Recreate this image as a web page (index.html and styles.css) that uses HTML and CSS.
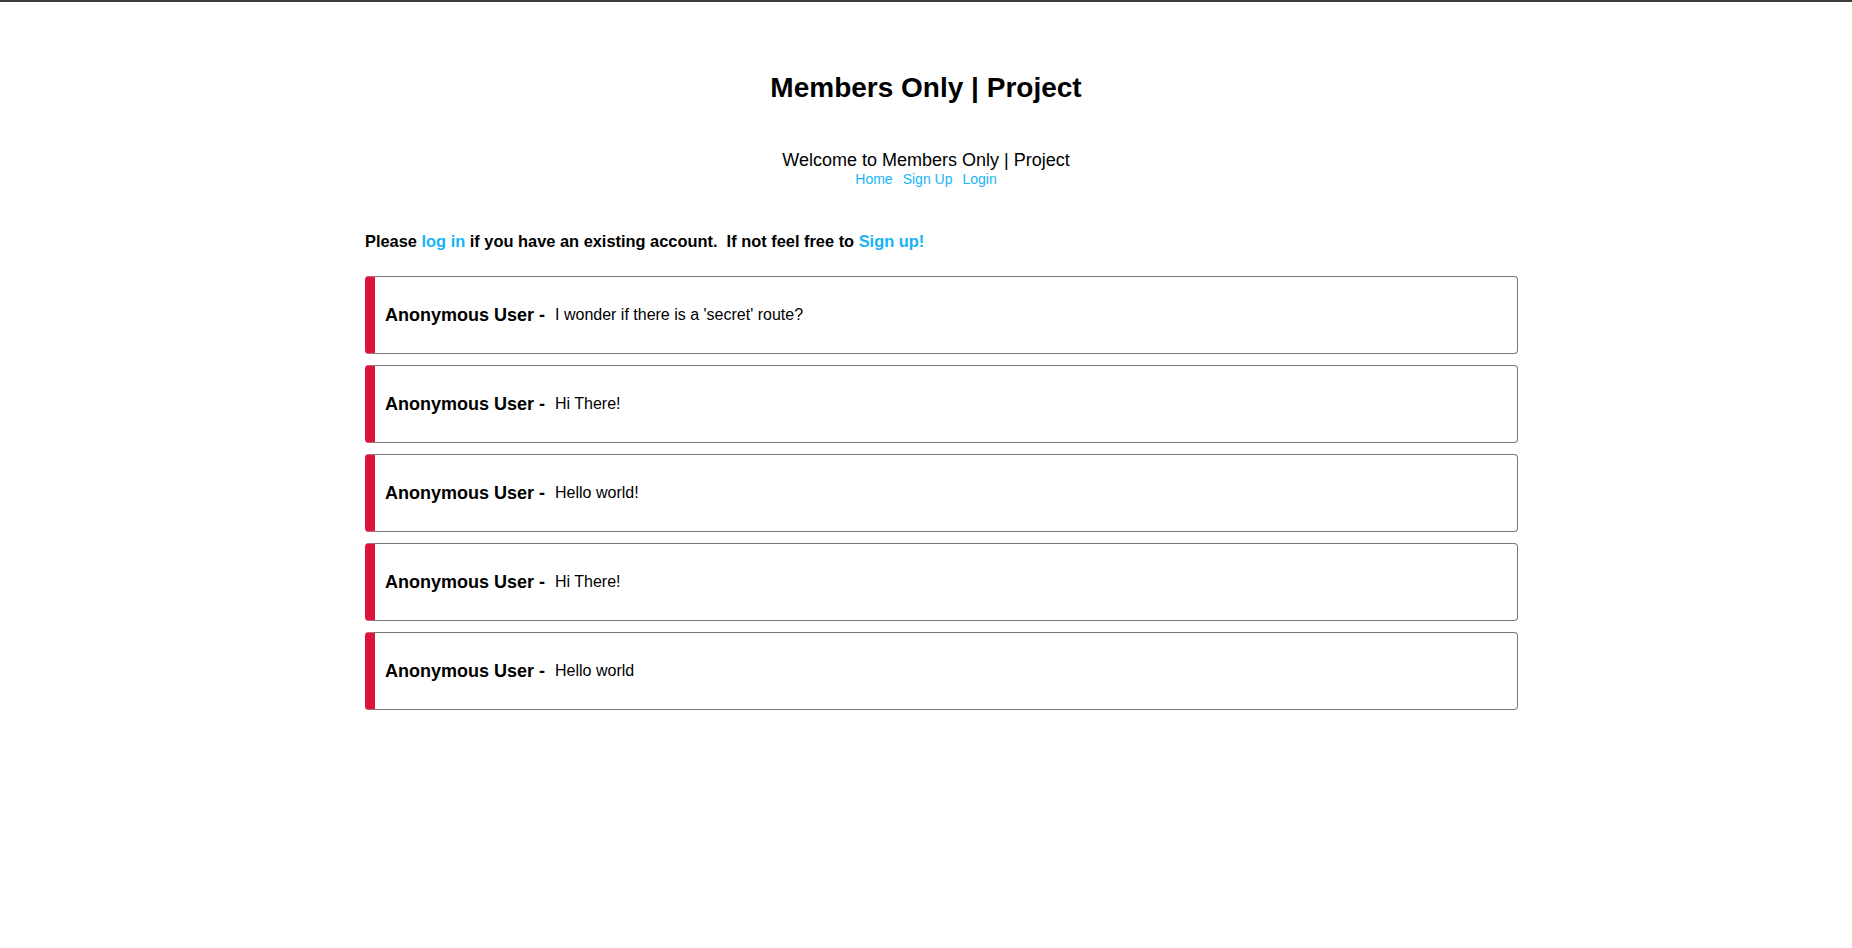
FILE: index.html
```html
<!DOCTYPE html>
<html lang="en">
<head>
<meta charset="utf-8">
<title>Members Only | Project</title>
<link rel="stylesheet" href="styles.css">
</head>
<body>
<div class="topline"></div>
<header class="header">
  <h1 class="title">Members Only | Project</h1>
  <div class="welcome">
    <p class="welcome-text">Welcome to Members Only | Project</p>
    <nav class="nav">
      <a href="#">Home</a>
      <a href="#">Sign Up</a>
      <a href="#">Login</a>
    </nav>
  </div>
</header>
<main class="main">
  <p class="notice">Please <a href="#">log in</a> if you have an existing account.&nbsp; If not feel free to <a href="#">Sign up!</a></p>
  <ul class="messages">
    <li class="message"><span class="author">Anonymous User -</span><span class="text">I wonder if there is a 'secret' route?</span></li>
    <li class="message"><span class="author">Anonymous User -</span><span class="text">Hi There!</span></li>
    <li class="message"><span class="author">Anonymous User -</span><span class="text">Hello world!</span></li>
    <li class="message"><span class="author">Anonymous User -</span><span class="text">Hi There!</span></li>
    <li class="message"><span class="author">Anonymous User -</span><span class="text">Hello world</span></li>
  </ul>
</main>
</body>
</html>
```
FILE: styles.css
```css
* { box-sizing: border-box; }
html, body { margin: 0; padding: 0; background: #fff; }
body {
  font-family: "Liberation Sans", Arial, sans-serif;
  color: #000;
}
.topline {
  height: 2px;
  background: #3c3c3c;
}
.header {
  display: flex;
  flex-direction: column;
  align-items: center;
}
.title {
  margin: 68px 0 0;
  font-size: 28px;
  line-height: 36px;
  font-weight: bold;
}
.welcome {
  margin-top: 43px;
  display: flex;
  flex-direction: column;
  align-items: center;
}
.welcome-text {
  margin: 0;
  font-size: 18px;
  line-height: 22px;
}
.nav {
  display: flex;
  gap: 10px;
  font-size: 14px;
  line-height: 16px;
}
a { color: #17b4f4; text-decoration: none; }
.main {
  width: 1153px;
  margin: 0 0 0 365px;
}
.notice {
  margin: 44px 0 0;
  font-size: 16.4px;
  line-height: 20px;
  font-weight: bold;
}
.messages {
  list-style: none;
  margin: 25px 0 0;
  padding: 0;
  display: flex;
  flex-direction: column;
  gap: 11px;
}
.message {
  height: 78px;
  border: 1px solid #777;
  border-left: 10px solid #dc143c;
  border-radius: 4px;
  display: flex;
  align-items: center;
  padding-left: 10px;
}
.author {
  font-weight: bold;
  font-size: 18px;
  margin-right: 10px;
}
.text {
  font-size: 16px;
}
```
